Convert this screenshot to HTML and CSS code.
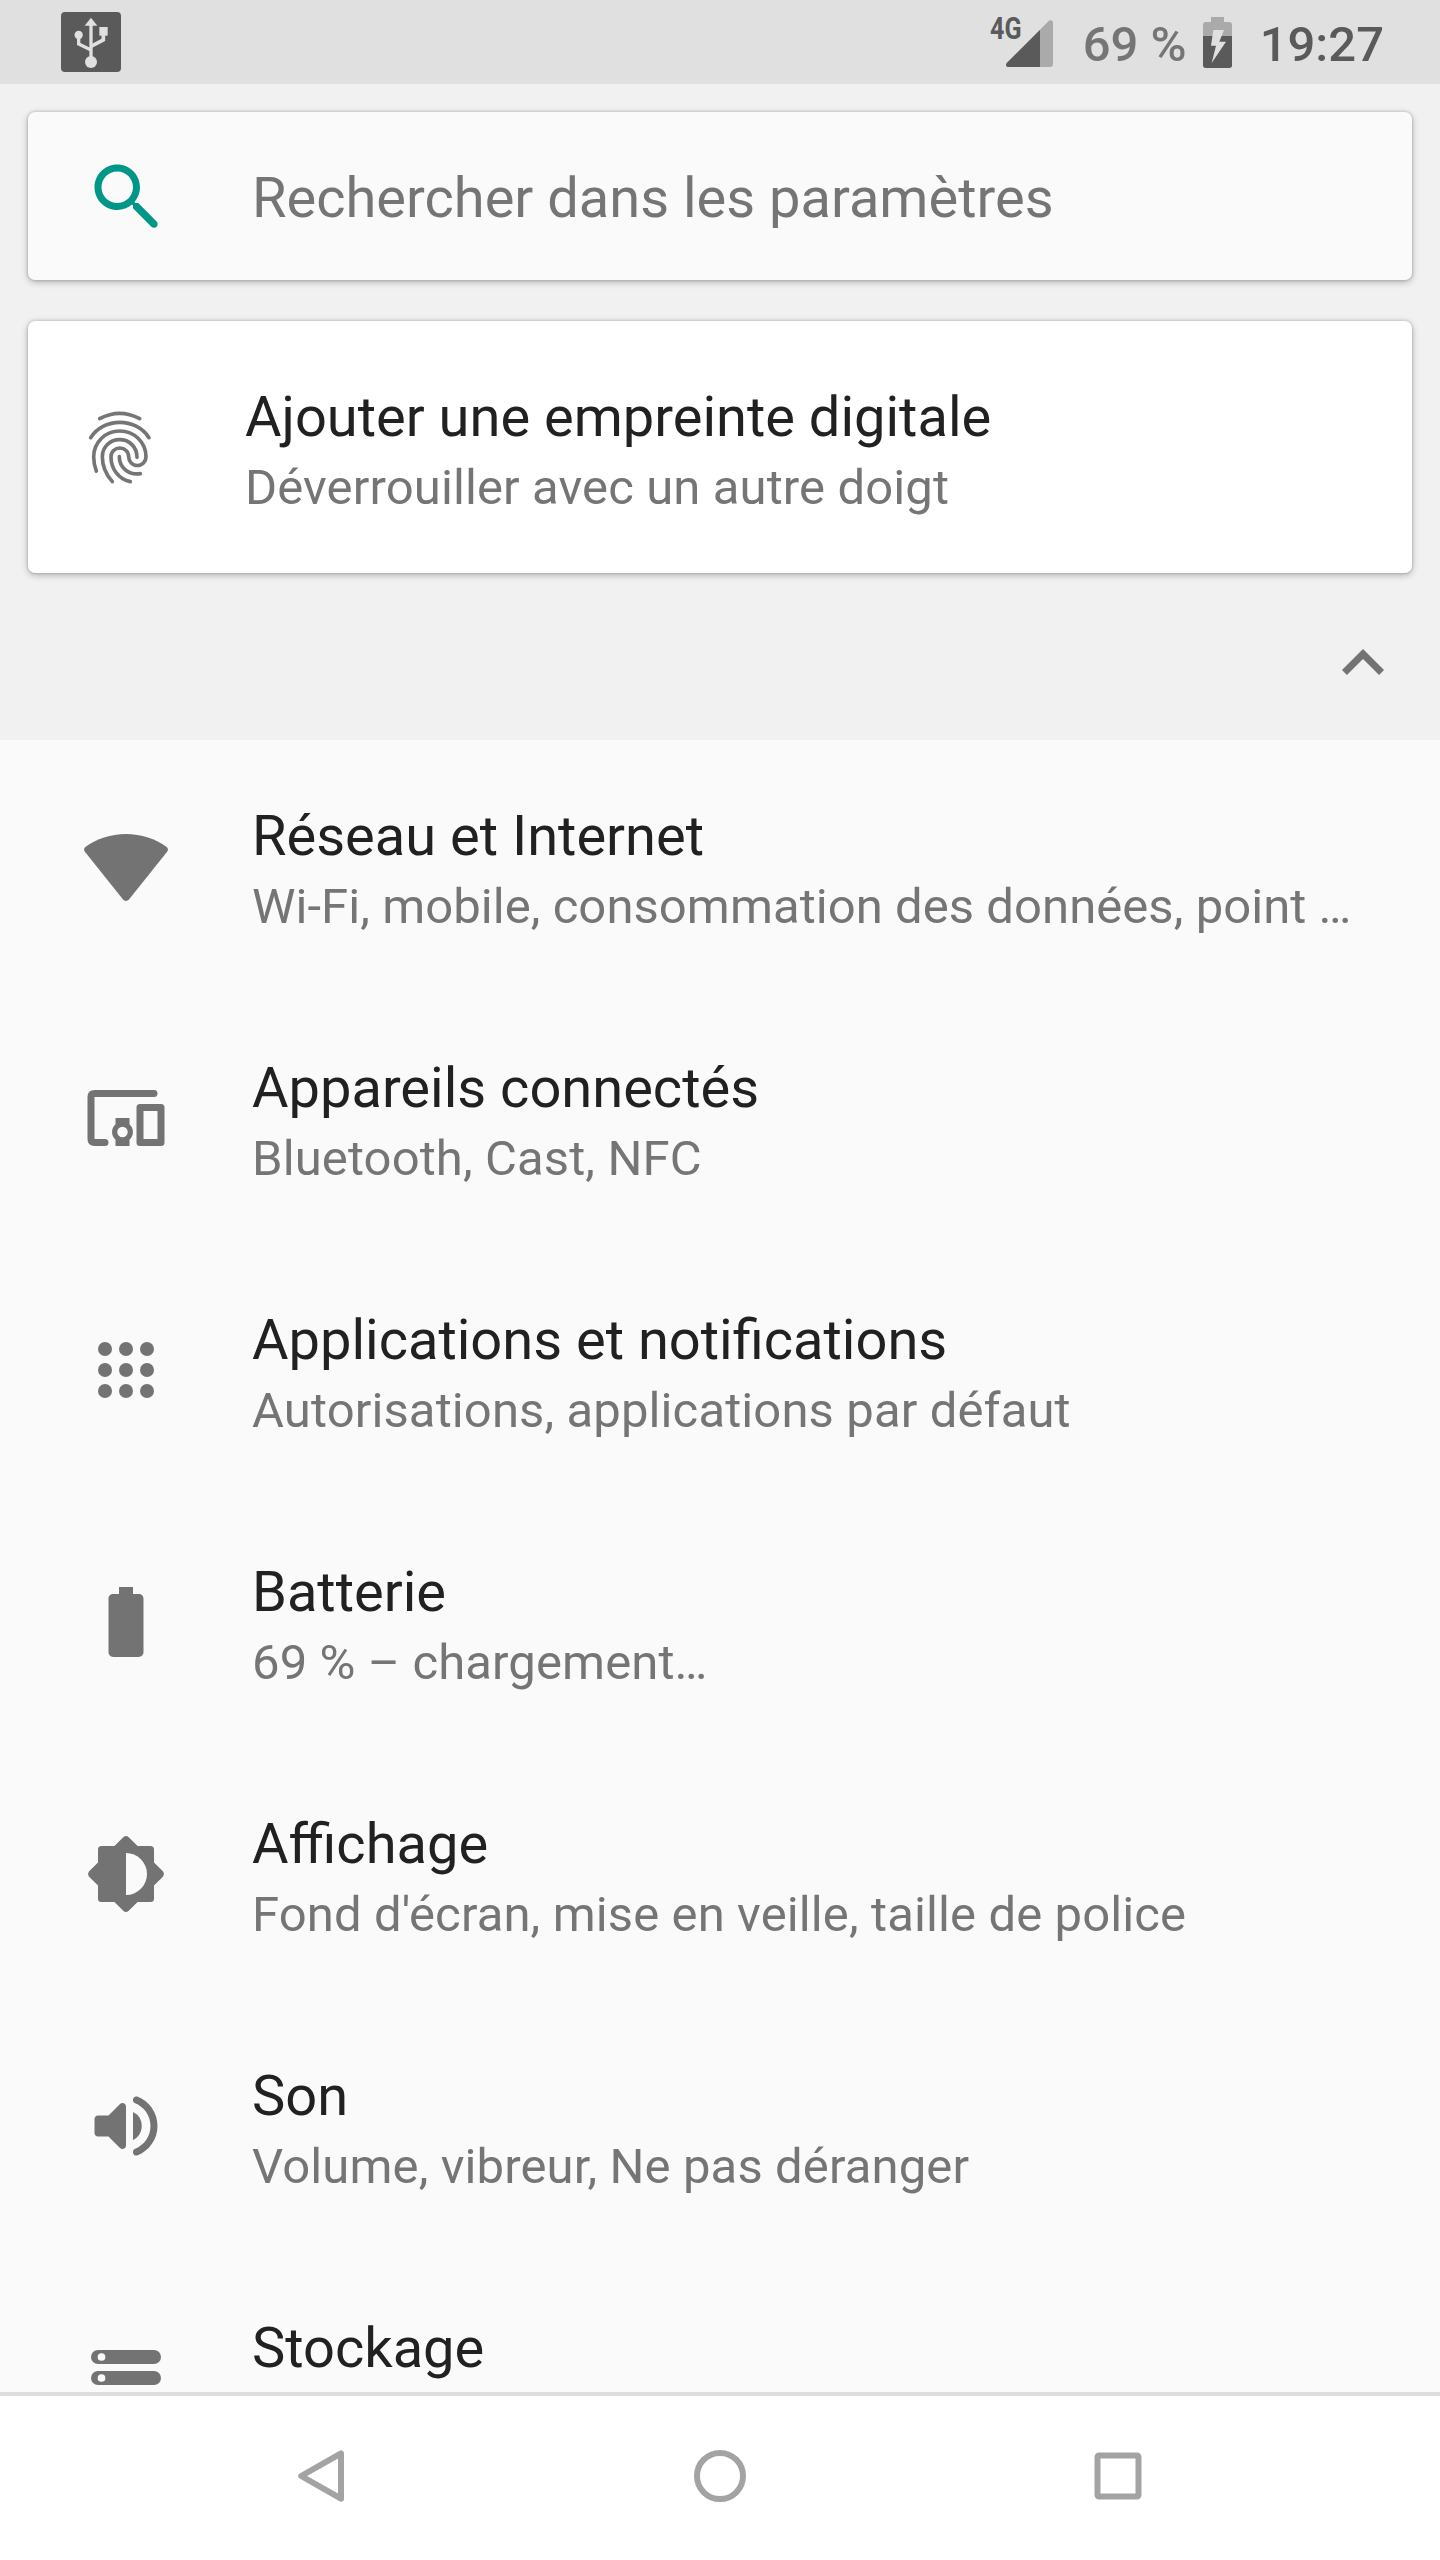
FILE: index.html
```html
<!DOCTYPE html>
<html lang="fr">
<head>
<meta charset="utf-8">
<title>Paramètres</title>
<link rel="stylesheet" href="styles.css">
</head>
<body>
<div class="screen">
  <header class="status-bar">
    <svg class="usb" viewBox="0 0 180 180">
      <rect width="180" height="180" rx="12" fill="#5a5a5a"/>
      <g fill="none" stroke="#e0e0e0" stroke-width="10">
        <path d="M90 30V150"/>
        <path d="M53 69V96L90 114"/>
        <path d="M127 68V84L90 103" stroke-width="11"/>
      </g>
      <g fill="#e0e0e0">
        <path d="M90 17l19 24H71z"/>
        <circle cx="90" cy="150" r="18"/>
        <circle cx="53" cy="69" r="12.5"/>
        <rect x="115" y="45" width="25" height="26"/>
      </g>
    </svg>
    <div class="status-right">
      <div class="network">
        <span class="network-type">4G</span>
        <svg class="signal" viewBox="0 0 141 141">
          <path d="M102 29L128 3Q134-2 140 4Q141 6 141 8V132Q141 141 132 141H102z" fill="#aaa"/>
          <path d="M102 29V141H8Q0 141 0 134Q0 131 2 129z" fill="#5a5a5a"/>
        </svg>
      </div>
      <span class="percent">69 %</span>
      <svg class="charge" viewBox="0 0 87 153">
        <path d="M24 0H63V15H79Q87 15 87 24V57H0V24Q0 15 8 15H24z" fill="#aaa"/>
        <path d="M0 57H87V145Q87 153 79 153H8Q0 153 0 145z" fill="#5a5a5a"/>
        <path d="M31 39H63L49 74H69L26 138L39 86H24z" fill="#e0e0e0"/>
      </svg>
      <span class="clock">19:27</span>
    </div>
  </header>

  <section class="top">
    <div class="card search">
      <svg class="icon" viewBox="0 0 24 24"><path d="M15.5 14h-.79l-.28-.27C15.41 12.59 16 11.11 16 9.5 16 5.91 13.09 3 9.5 3S3 5.91 3 9.5 5.91 16 9.5 16c1.61 0 3.09-.59 4.23-1.57l.27.28v.79l5.25 5.25c.41.41 1.08.41 1.49 0 .41-.41.41-1.08 0-1.49L15.5 14zM9.5 14C7.01 14 5 11.99 5 9.5S7.01 5 9.5 5 14 7.01 14 9.5 11.99 14 9.5 14z"/></svg>
      <span class="placeholder">Rechercher dans les paramètres</span>
    </div>
    <div class="card suggestion">
      <svg class="icon" viewBox="234 315 252 252">
        <g fill="none" stroke="#757575" stroke-width="11" stroke-linecap="round">
          <path d="M299 356Q359 324 419 356"/>
          <path d="M272 413C312 352 407 352 447 413"/>
          <path d="M289 513C284 500 281 486 281 470C281 427 316 393 359 393C403 393 438 427 438 470A26 26.5 0 0 1 386 470A26.5 26 0 0 0 333 470C333 507 356 538 391 545"/>
          <path d="M337 545C316 521 307 498 307 470C307 441 330 419 359 419C388 419 411 441 411 472"/>
          <path d="M358 470C358 502 385 526 421 521"/>
        </g>
      </svg>
      <div class="text">
        <div class="title">Ajouter une empreinte digitale</div>
        <div class="summary">Déverrouiller avec un autre doigt</div>
      </div>
    </div>
    <div class="collapse">
      <svg class="icon" viewBox="0 0 24 24"><path d="M12 8l-6 6 1.41 1.41L12 10.83l4.59 4.58L18 14z"/></svg>
    </div>
  </section>

  <main class="list">
    <div class="row">
      <svg class="icon" viewBox="0 0 24 24"><path d="M12 2.85C16.4 2.85 20.4 4.25 23.6 6.55Q24.3 7.2 23.75 7.95L12.9 21.5Q12 22.45 11.1 21.5L.25 7.95Q-.3 7.2.4 6.55C3.6 4.25 7.6 2.85 12 2.85z"/></svg>
      <div class="text">
        <div class="title">Réseau et Internet</div>
        <div class="summary tight">Wi-Fi, mobile, consommation des données, point …</div>
      </div>
    </div>
    <div class="row">
      <svg class="icon" viewBox="0 0 24 24">
        <path d="M20 5H3Q2 5 2 6V18Q2 19 3 19H6" fill="none" stroke="#737373" stroke-width="2" stroke-linecap="round"/>
        <path fill-rule="evenodd" d="M9 12h4v1.78a3 3 0 0 1 0 4.44V20H9v-1.78a3 3 0 0 1 0-4.44zM11 14.5a1.5 1.5 0 1 0 0 3 1.5 1.5 0 0 0 0-3z"/>
        <path fill-rule="evenodd" d="M16 8h6q1 0 1 1v10q0 1-1 1h-6q-1 0-1-1V9q0-1 1-1zM17 10v8h4v-8z"/>
      </svg>
      <div class="text">
        <div class="title">Appareils connectés</div>
        <div class="summary">Bluetooth, Cast, NFC</div>
      </div>
    </div>
    <div class="row">
      <svg class="icon" viewBox="0 0 24 24">
        <circle cx="6" cy="6" r="2"/><circle cx="12" cy="6" r="2"/><circle cx="18" cy="6" r="2"/>
        <circle cx="6" cy="12" r="2"/><circle cx="12" cy="12" r="2"/><circle cx="18" cy="12" r="2"/>
        <circle cx="6" cy="18" r="2"/><circle cx="12" cy="18" r="2"/><circle cx="18" cy="18" r="2"/>
      </svg>
      <div class="text">
        <div class="title">Applications et notifications</div>
        <div class="summary">Autorisations, applications par défaut</div>
      </div>
    </div>
    <div class="row">
      <svg class="icon" viewBox="0 0 24 24"><path d="M15.67 4H14V2h-4v2H8.33C7.6 4 7 4.6 7 5.33v15.33C7 21.4 7.6 22 8.33 22h7.33c.74 0 1.34-.6 1.34-1.33V5.33C17 4.6 16.4 4 15.67 4z"/></svg>
      <div class="text">
        <div class="title">Batterie</div>
        <div class="summary">69 % – chargement…</div>
      </div>
    </div>
    <div class="row">
      <svg class="icon" viewBox="0 0 24 24">
        <path d="M20 8.69V5Q20 4 19 4H15.31L12.7 1.4Q12 .88 11.3 1.4L8.69 4H5Q4 4 4 5V8.69L1.4 11.3Q.88 12 1.4 12.7L4 15.31V19Q4 20 5 20H8.69L11.3 22.6Q12 23.12 12.7 22.6L15.31 20H19Q20 20 20 19V15.31L22.6 12.7Q23.12 12 22.6 11.3z"/>
        <path class="half" d="M12 6a6 6 0 0 1 0 12z"/>
      </svg>
      <div class="text">
        <div class="title">Affichage</div>
        <div class="summary">Fond d'écran, mise en veille, taille de police</div>
      </div>
    </div>
    <div class="row">
      <svg class="icon" viewBox="0 0 24 24"><path d="M3 10v4c0 .55.45 1 1 1h3l3.29 3.29c.63.63 1.71.18 1.71-.71V6.41c0-.89-1.08-1.34-1.71-.71L7 9H4c-.55 0-1 .45-1 1zm13.5 2A4.5 4.5 0 0 0 14 7.97v8.05c1.48-.73 2.5-2.25 2.5-4.02zM14 4.45v.2c0 .38.25.71.6.85C17.18 6.53 19 9.06 19 12s-1.82 5.47-4.4 6.5c-.36.14-.6.47-.6.85v.2c0 .63.63 1.07 1.21.85C18.6 19.11 21 15.84 21 12s-2.4-7.11-5.79-8.4c-.58-.23-1.21.22-1.21.85z"/></svg>
      <div class="text">
        <div class="title">Son</div>
        <div class="summary">Volume, vibreur, Ne pas déranger</div>
      </div>
    </div>
    <div class="row">
      <svg class="icon" viewBox="0 0 24 24">
        <rect x="2" y="4" width="20" height="4" rx="2"/>
        <rect x="2" y="10" width="20" height="4" rx="2"/>
        <circle class="half" cx="5" cy="6" r="1.1"/>
        <circle class="half" cx="5" cy="12" r="1.1"/>
      </svg>
      <div class="text">
        <div class="title">Stockage</div>
      </div>
    </div>
  </main>

  <nav class="nav-bar">
    <svg class="nav-icon" viewBox="0 0 60 60"><path d="M9.2 30L49 7.3V52.7z"/></svg>
    <svg class="nav-icon" viewBox="0 0 60 60"><circle cx="30" cy="30" r="23"/></svg>
    <svg class="nav-icon" viewBox="0 0 60 60"><rect x="9.5" y="9.5" width="41" height="41" rx="1.5"/></svg>
  </nav>
</div>
</body>
</html>
```
FILE: styles.css
```css
* {
  box-sizing: border-box;
}

body {
  margin: 0;
  font-family: Roboto, "Liberation Sans", sans-serif;
}

svg {
  display: block;
  flex: none;
}

.screen {
  width: 1440px;
  height: 2560px;
  display: flex;
  flex-direction: column;
  overflow: hidden;
  background: #fafafa;
}

.status-bar {
  flex: none;
  height: 84px;
  padding: 0 56px 0 61px;
  display: flex;
  align-items: center;
  justify-content: space-between;
  background: #e0e0e0;
}

.usb {
  width: 60px;
  height: 60px;
}

.status-right {
  display: flex;
  align-items: center;
  height: 84px;
  font-size: 49px;
  font-weight: 500;
  line-height: 58px;
  white-space: pre;
}

.network {
  display: flex;
  align-items: flex-start;
  margin-right: 30px;
}

.network-type {
  width: 15px;
  font-size: 31px;
  font-weight: 700;
  line-height: 30px;
  color: #5a5a5a;
  transform: translate(-1px, -3px) scaleX(0.81);
  transform-origin: 0 0;
}

.signal {
  width: 47px;
  height: 47px;
  margin-top: 3px;
}

.percent {
  margin: 5px 16px 0 0;
  color: #757575;
}

.charge {
  width: 29px;
  height: 51px;
  margin-right: 28px;
}

.clock {
  margin-top: 5px;
  color: #5a5a5a;
}

.top {
  flex: none;
  height: 656px;
  padding: 28px 28px 0;
  display: flex;
  flex-direction: column;
  background: #f1f1f1;
}

.card {
  display: flex;
  align-items: center;
  border-radius: 7px;
  box-shadow: 0 2px 7px rgba(0, 0, 0, 0.28), 0 0 3px rgba(0, 0, 0, 0.22);
}

.search {
  height: 168px;
  margin-bottom: 41px;
  padding-left: 56px;
  gap: 84px;
  background: #fafafa;
}

.search .icon {
  fill: #009688;
}

.placeholder {
  padding-top: 4px;
  font-size: 56px;
  color: #757575;
}

.suggestion {
  height: 252px;
  padding-left: 50px;
  gap: 83px;
  background: #fff;
}

.collapse {
  display: flex;
  justify-content: flex-end;
  padding: 48px 7px 0 0;
}

.icon {
  width: 84px;
  height: 84px;
  fill: #737373;
}

.half {
  fill: #fafafa;
}

.list {
  flex: none;
  height: 1652px;
  overflow: hidden;
}

.row {
  height: 252px;
  padding-left: 84px;
  display: flex;
  align-items: center;
  gap: 84px;
}

.text {
  height: 126px;
  display: flex;
  flex-direction: column;
  gap: 9px;
  white-space: nowrap;
}

.title {
  flex: none;
  font-size: 56px;
  line-height: 66px;
  color: #212121;
}

.summary {
  flex: none;
  font-size: 49px;
  line-height: 58px;
  letter-spacing: 0.12px;
  color: #757575;
}

.summary.tight {
  letter-spacing: 0.06px;
}

.nav-bar {
  flex: none;
  height: 168px;
  padding-bottom: 4px;
  display: flex;
  justify-content: center;
  align-items: center;
  gap: 338px;
  border-top: 4px solid #ddd;
  background: #fff;
}

.nav-icon {
  width: 60px;
  height: 60px;
  fill: none;
  stroke: #a3a3a3;
  stroke-width: 6;
  stroke-linejoin: round;
}
```
